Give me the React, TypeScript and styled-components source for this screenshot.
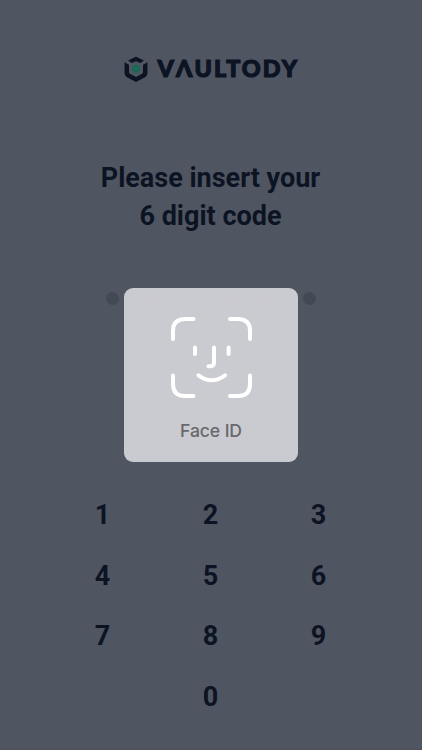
import React from "react";
import styled, { createGlobalStyle } from "styled-components";

const ink = "#0c1424";

const GlobalStyle = createGlobalStyle`
  * { box-sizing: border-box; }
  body { margin: 0; background: #505661; }
`;

const Screen = styled.main`
  position: relative;
  width: 422px;
  height: 750px;
  overflow: hidden;
  display: flex;
  flex-direction: column;
  align-items: center;
  padding-top: 55px;
  border-bottom: 1px solid #504f5a;
  background: #505661;
  color: ${ink};
  font-family: Roboto, sans-serif;
`;

const Brand = styled.header`
  display: flex;
  align-items: center;
  gap: 9px;
  height: 28px;
`;

const Mark = styled.svg`
  display: block;
  width: 24px;
  height: 28px;
`;

const Wordmark = styled.svg`
  display: block;
  width: 141px;
  height: 28px;
  overflow: visible;
`;

const Title = styled.h1`
  margin: 76px 1px 0 0;
  font-size: 27px;
  line-height: 38px;
  font-weight: 660;
  text-align: center;
`;

const Dots = styled.div`
  display: flex;
  gap: 26.4px;
  margin-top: 56.5px;
`;

const Dot = styled.span`
  width: 13px;
  height: 13px;
  border-radius: 50%;
  background: #434a56;
`;

const Keypad = styled.div`
  display: grid;
  grid-template-columns: repeat(3, 108px);
  grid-auto-rows: 60.6px;
  margin: 180.5px 1px 0 0;
`;

const Key = styled.button<{ $column?: number }>`
  grid-column: ${({ $column }) => $column ?? "auto"};
  padding: 0;
  border: 0;
  background: none;
  color: inherit;
  font: 660 27px/60px Roboto, sans-serif;
`;

const FaceDialog = styled.section`
  position: absolute;
  left: 124px;
  top: 288px;
  width: 174px;
  height: 174px;
  display: flex;
  flex-direction: column;
  align-items: center;
  padding-top: 28px;
  border-radius: 9px;
  background: rgba(205, 205, 210, 0.98);
`;

const FaceIcon = styled.svg`
  display: block;
  width: 84px;
  height: 84px;
`;

const FaceLabel = styled.span`
  margin-top: 19px;
  color: #68686c;
  font: 500 17.6px/24px Inter, sans-serif;
  letter-spacing: -0.1px;
`;

const digits = ["1", "2", "3", "4", "5", "6", "7", "8", "9"];

export default function App() {
  return (
    <>
      <GlobalStyle />
      <Screen>
        <Brand aria-label="Vaultody">
          <Mark viewBox="0 0 24 28" fill={ink}>
            <path d="M11.2 1.9Q12 1.4 12.8 1.9L20 5.5 16.2 8 12.8 6.4Q12 6 11.2 6.4L7.8 8 4 5.5Z" />
            <path d="M.5 7.2 5 9.7V16.9Q5 18.4 6.3 19.1L12 22.1 17.7 19.1Q19 18.4 19 16.9V9.7L23.5 7.2V17.7Q23.5 21 20.6 22.5L12 27 3.4 22.5Q.5 21 .5 17.7Z" />
            <circle cx="12" cy="13.7" r="4.2" fill="#1d6854" />
          </Mark>
          <Wordmark viewBox="0 0 141 28">
            <text
              x="0.5"
              y="22.4"
              fill={ink}
              stroke={ink}
              strokeWidth="1.2"
              fontFamily="Lato, sans-serif"
              fontSize="23.3"
              fontWeight="900"
              textLength="139.5"
            >
              VΛULTODY
            </text>
          </Wordmark>
        </Brand>
        <Title>
          Please insert your
          <br />6 digit code
        </Title>
        <Dots>
          {[0, 1, 2, 3, 4, 5].map((n) => (
            <Dot key={n} />
          ))}
        </Dots>
        <Keypad>
          {digits.map((d) => (
            <Key key={d}>{d}</Key>
          ))}
          <Key $column={2}>0</Key>
        </Keypad>
        <FaceDialog role="dialog" aria-label="Face ID">
          <FaceIcon
            viewBox="169 316 84 84"
            fill="none"
            stroke="#fff"
            strokeWidth="4"
            strokeLinecap="round"
            strokeLinejoin="round"
          >
            <path d="M173 339V331Q173 319 185 319H193.5M230 319H238Q250 319 250 331V339M173 375.5V384Q173 396 185 396H193.5M230 396H238Q250 396 250 384V375.5" />
            <path d="M195 347.5V354M228.6 347.5V354M214 347.5V362.5Q214 366.2 210.5 366.2H208.5M198.5 375.3Q211.7 385.2 225 375.3" />
          </FaceIcon>
          <FaceLabel>Face ID</FaceLabel>
        </FaceDialog>
      </Screen>
    </>
  );
}
